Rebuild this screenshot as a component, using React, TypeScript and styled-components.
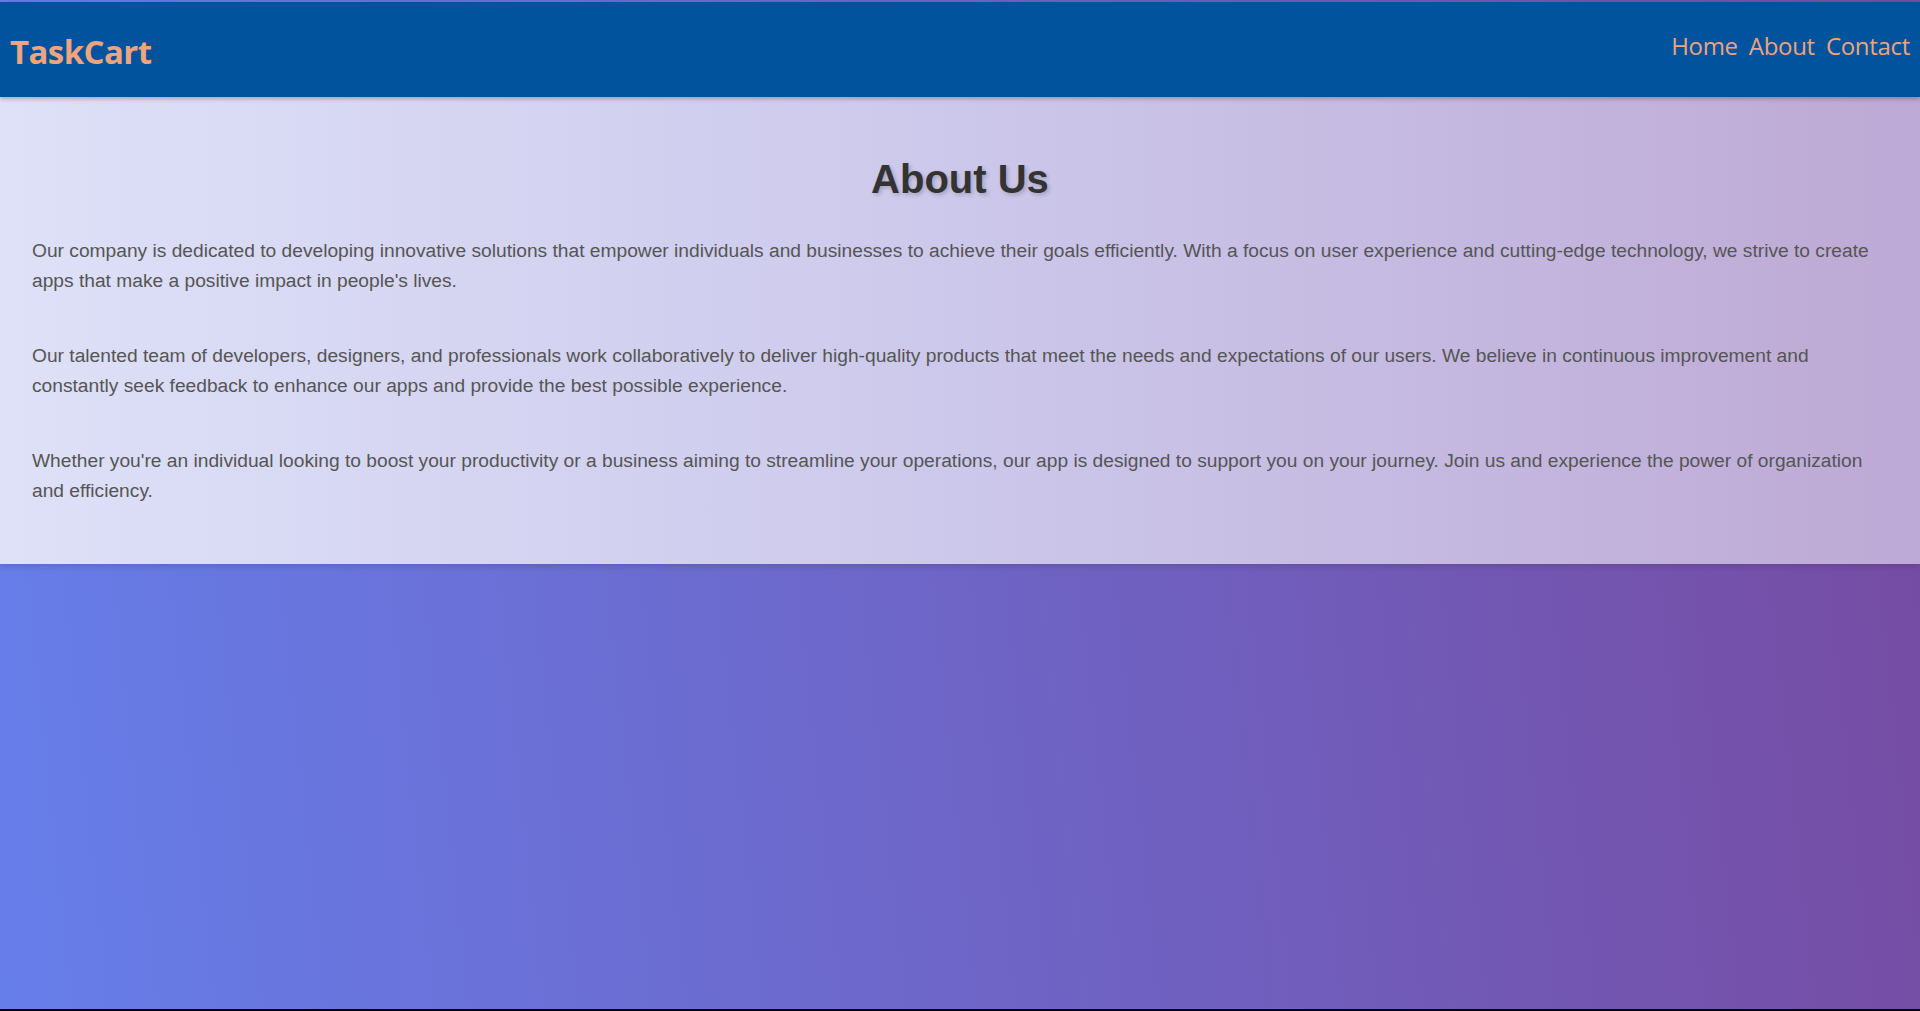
import React from "react";
import styled, { createGlobalStyle } from "styled-components";

const GlobalStyle = createGlobalStyle`
  html { background: #000; }
  body {
    margin: 0;
    font-family: "Liberation Sans", Arial, sans-serif;
  }
`;

const Page = styled.div`
  min-height: calc(100vh - 2px);
  box-sizing: border-box;
  padding-top: 2px;
  background: linear-gradient(84deg, #667eea 0%, #764ba2 100%);
  display: flex;
  flex-direction: column;
`;

const Header = styled.header`
  height: 95px;
  background: #00539c;
  display: flex;
  align-items: center;
  justify-content: space-between;
  padding: 0 10px;
  box-shadow: 0 2px 4px rgba(0, 0, 0, 0.25);
  position: relative;
  z-index: 1;
`;

const Logo = styled.div`
  font-family: "Open Sans", "Noto Sans", sans-serif;
  font-weight: 700;
  font-size: 33px;
  letter-spacing: -0.6px;
  color: #eea47f;
  padding-top: 4px;
`;

const Nav = styled.nav`
  display: flex;
  gap: 11px;
  padding-bottom: 8px;
`;

const NavLink = styled.a`
  font-family: "Open Sans", "Noto Sans", sans-serif;
  font-size: 24px;
  letter-spacing: -0.3px;
  color: #eea47f;
  text-decoration: none;
  cursor: pointer;
`;

const Panel = styled.section`
  background: linear-gradient(90deg, #dee1f8 0%, #ccc8eb 50%, #bda9d5 100%);
  padding: 60px 32px 58px;
  box-shadow: 0 3px 6px rgba(0, 0, 0, 0.12);
`;

const Title = styled.h1`
  margin: 0 0 34px;
  text-align: center;
  font-family: "Liberation Sans", Arial, sans-serif;
  font-size: 40px;
  font-weight: 700;
  color: #333;
  text-shadow: 2px 2px 4px rgba(0, 0, 0, 0.2);
`;

const Paragraph = styled.p`
  margin: 0 0 45px;
  font-size: 19.2px;
  line-height: 30px;
  color: #555;
  &:last-child { margin-bottom: 0; }
`;

export default function App() {
  return (
    <>
      <GlobalStyle />
      <Page>
        <Header>
          <Logo>TaskCart</Logo>
          <Nav>
            <NavLink>Home</NavLink>
            <NavLink>About</NavLink>
            <NavLink>Contact</NavLink>
          </Nav>
        </Header>
        <Panel>
          <Title>About Us</Title>
          <Paragraph>
            Our company is dedicated to developing innovative solutions that empower individuals and businesses to achieve their goals efficiently. With a focus on user experience and cutting-edge technology, we strive to create apps that make a positive impact in people's lives.
          </Paragraph>
          <Paragraph>
            Our talented team of developers, designers, and professionals work collaboratively to deliver high-quality products that meet the needs and expectations of our users. We believe in continuous improvement and constantly seek feedback to enhance our apps and provide the best possible experience.
          </Paragraph>
          <Paragraph>
            Whether you're an individual looking to boost your productivity or a business aiming to streamline your operations, our app is designed to support you on your journey. Join us and experience the power of organization and efficiency.
          </Paragraph>
        </Panel>
      </Page>
    </>
  );
}
